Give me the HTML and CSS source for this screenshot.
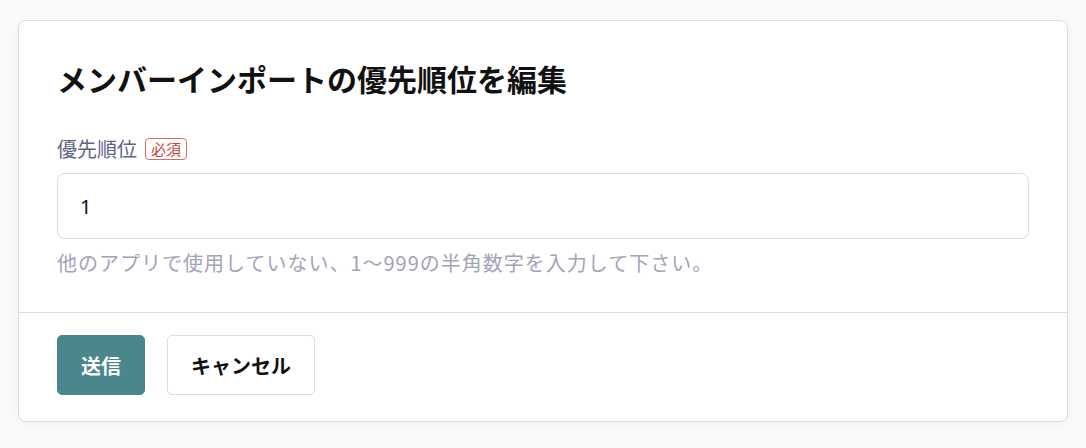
FILE: index.html
```html
<!DOCTYPE html>
<html lang="ja">
<head>
<meta charset="utf-8">
<link rel="stylesheet" href="styles.css">
</head>
<body>
<div class="page">
  <div class="card">
    <div class="card-body">
      <h1 class="title">メンバーインポートの優先順位を編集</h1>
      <div class="field">
        <label class="label">優先順位<span class="badge">必須</span></label>
        <div class="input">1</div>
        <p class="hint">他のアプリで使用していない、1〜999の半角数字を入力して下さい。</p>
      </div>
    </div>
    <div class="card-footer">
      <button class="btn btn-primary">送信</button>
      <button class="btn btn-secondary">キャンセル</button>
    </div>
  </div>
</div>
</body>
</html>
```
FILE: styles.css
```css
* { box-sizing: border-box; }
html, body { margin: 0; padding: 0; background: #fafafa; }
body {
  font-family: "Noto Sans CJK JP", "Noto Sans", sans-serif;
  color: #111;
}
.page { padding: 20px 18px 26px 18px; }
.card {
  background: #fff;
  border: 1px solid #dcdcdc;
  border-radius: 8px;
  box-shadow: 0 2px 12px rgba(0,0,0,0.04);
}
.card-body { padding: 35px 38px 34px 38px; border-bottom: 1px solid #dcdcdc; }
.title {
  margin: 0;
  font-size: 30px;
  line-height: 45px;
  font-weight: 700;
  color: #111;
}
.field { margin-top: 33px; }
.label {
  display: flex;
  align-items: center;
  font-size: 20px;
  line-height: 30px;
  color: #5f6385;
}
.badge {
  margin-left: 8px;
  font-size: 15px;
  line-height: 20px;
  padding: 0 5px;
  color: #c9423d;
  border: 1px solid #d66a64;
  border-radius: 4px;
}
.input {
  margin-top: 9px;
  height: 66px;
  border: 1px solid #dcdcdc;
  border-radius: 8px;
  padding: 0 22px;
  display: flex;
  align-items: center;
  font-family: "Noto Sans", sans-serif;
  font-size: 20px;
  color: #111;
}
.hint {
  margin: 9px 0 0 0;
  font-size: 20px;
  line-height: 30px;
  letter-spacing: 1px;
  color: #a3a3b8;
}
.card-footer { padding: 22px 38px 26px 38px; display: flex; gap: 22px; }
.btn {
  height: 60px;
  border-radius: 5px;
  font-family: "Noto Sans CJK JP", sans-serif;
  font-size: 20px;
  font-weight: 700;
  padding: 0 23px;
  cursor: pointer;
}
.btn-primary { background: #4a868c; color: #fff; border: 1px solid #4a868c; }
.btn-secondary { background: #fff; color: #111; border: 1px solid #dcdcdc; }
```
